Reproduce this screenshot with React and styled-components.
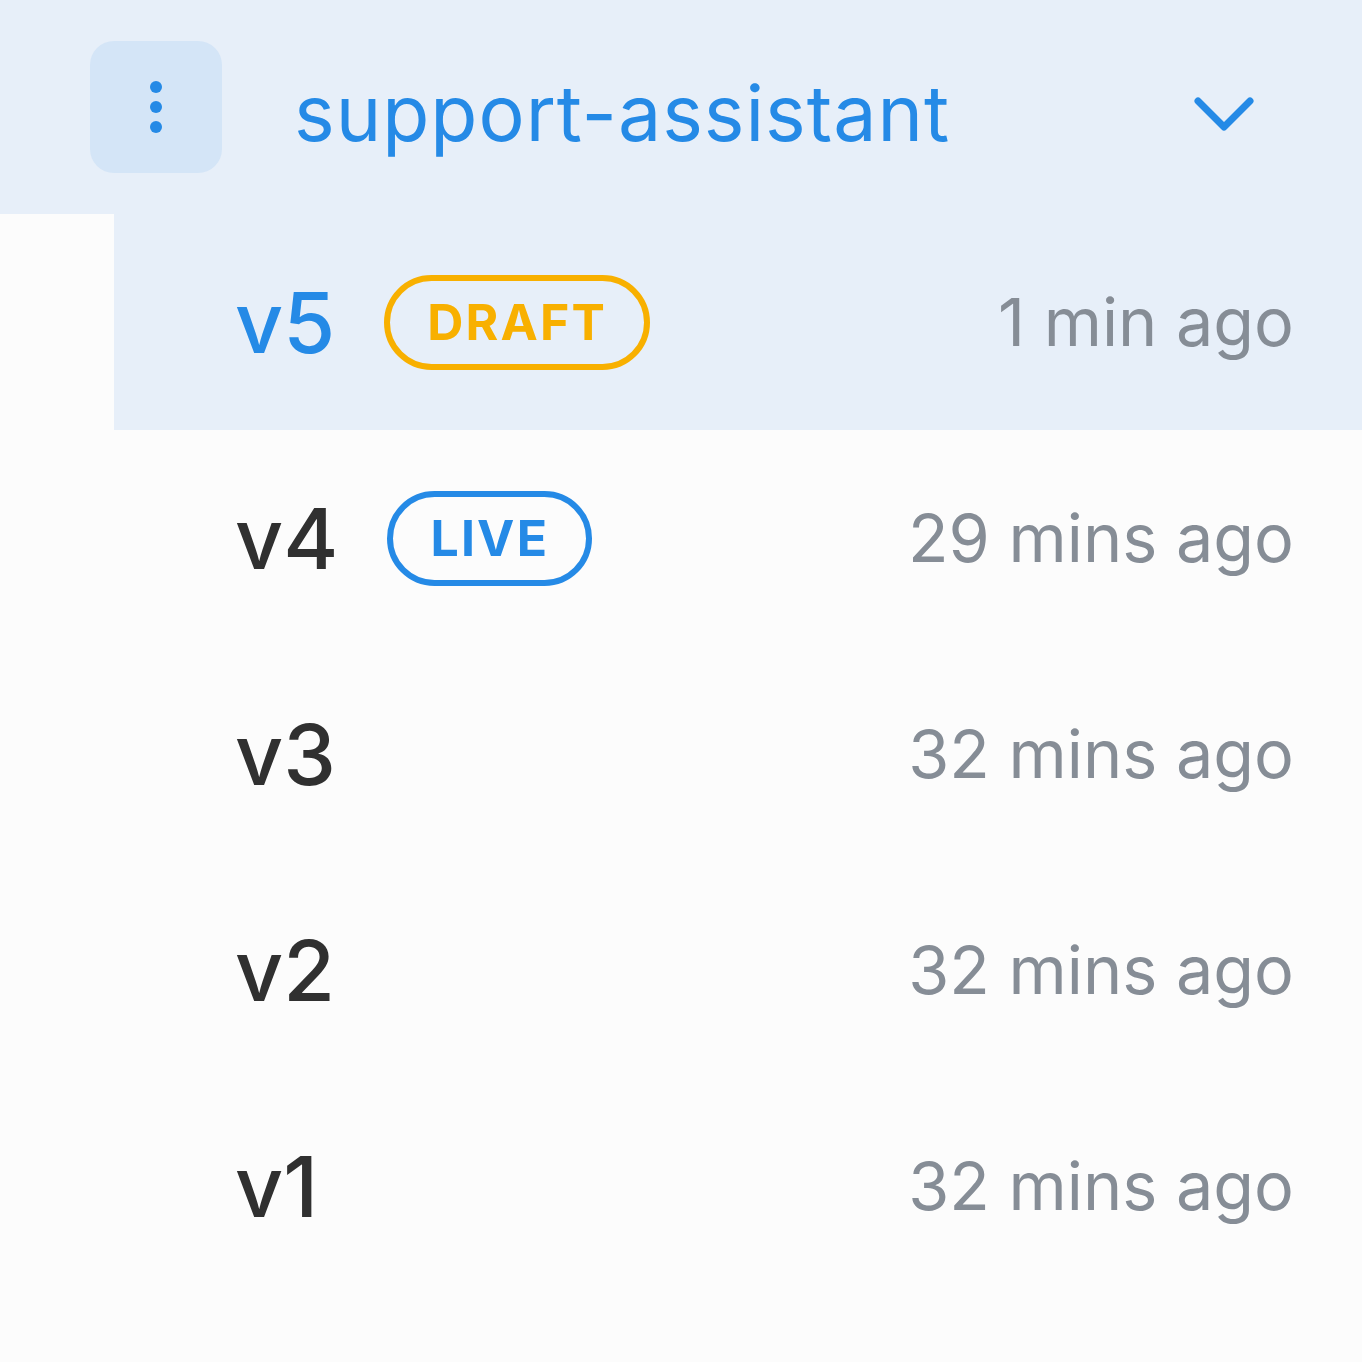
import React from 'react';
import styled, { createGlobalStyle } from 'styled-components';

const GlobalStyle = createGlobalStyle`
  html, body {
    margin: 0;
    padding: 0;
    background: #fcfcfc;
    font-family: Inter, Roboto, "Liberation Sans", sans-serif;
  }
`;

const Page = styled.div`
  width: 1362px;
  height: 1362px;
  background: #fcfcfc;
  overflow: hidden;
`;

const Header = styled.header`
  display: flex;
  align-items: center;
  height: 214px;
  padding: 0 108px 0 90px;
  background: #e7eff9;
  box-sizing: border-box;
`;

const MenuButton = styled.button`
  display: flex;
  flex-direction: column;
  align-items: center;
  justify-content: center;
  gap: 8px;
  width: 132px;
  height: 132px;
  border: none;
  border-radius: 24px;
  background: #d4e5f7;
  padding: 0;
  cursor: pointer;
`;

const Dot = styled.span`
  width: 12px;
  height: 12px;
  border-radius: 50%;
  background: #258ae6;
`;

const Title = styled.h1`
  flex: 1;
  margin: 12px 0 0 72px;
  font-size: 77px;
  font-weight: 400;
  color: #258ae6;
  letter-spacing: 1px;
`;

const Chevron = styled.svg`
  margin-top: 16px;
`;

const List = styled.ul`
  list-style: none;
  margin: 0 0 0 114px;
  padding: 0;
`;

const Row = styled.li`
  display: flex;
  align-items: center;
  height: 216px;
  padding: 0 68px 0 121px;
  background: ${p => (p.selected ? '#e7eff9' : 'transparent')};
`;

const Version = styled.span`
  font-size: 84px;
  font-weight: 500;
  color: ${p => (p.selected ? '#258ae6' : '#303030')};
`;

const Badge = styled.span`
  display: inline-flex;
  align-items: center;
  height: 95px;
  box-sizing: border-box;
  margin-left: 49px;
  padding: 0 37px;
  border: 6px solid ${p => p.color};
  border-radius: 48px;
  color: ${p => p.color};
  font-size: 50px;
  font-weight: 700;
  letter-spacing: 2.2px;
`;

const Time = styled.span`
  margin-left: auto;
  font-size: 66.5px;
  color: #868d96;
`;

const versions = [
  { name: 'v5', badge: 'DRAFT', color: '#f8b000', time: '1 min ago', selected: true },
  { name: 'v4', badge: 'LIVE', color: '#258ae6', time: '29 mins ago' },
  { name: 'v3', time: '32 mins ago' },
  { name: 'v2', time: '32 mins ago' },
  { name: 'v1', time: '32 mins ago' },
];

const App = () => (
  <Page>
    <GlobalStyle />
    <Header>
      <MenuButton aria-label="More">
        <Dot />
        <Dot />
        <Dot />
      </MenuButton>
      <Title>support-assistant</Title>
      <Chevron width="60" height="40" viewBox="0 0 60 40">
        <polyline
          points="4,6 30,32 56,6"
          fill="none"
          stroke="#258ae6"
          strokeWidth="7"
          strokeLinecap="round"
          strokeLinejoin="round"
        />
      </Chevron>
    </Header>
    <List>
      {versions.map(v => (
        <Row key={v.name} selected={v.selected}>
          <Version selected={v.selected}>{v.name}</Version>
          {v.badge && <Badge color={v.color}>{v.badge}</Badge>}
          <Time>{v.time}</Time>
        </Row>
      ))}
    </List>
  </Page>
);

export default App;
